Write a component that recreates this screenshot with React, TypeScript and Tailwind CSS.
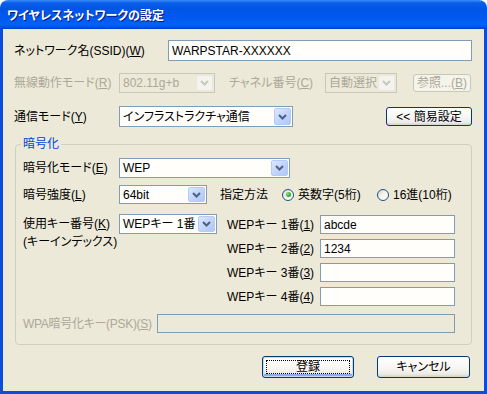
import React from "react";

const Chevron = ({ color }: { color: string }) => (
  <svg width="9" height="6" viewBox="0 0 9 6">
    <path d="M1 1l3.5 3.5L8 1" fill="none" stroke={color} strokeWidth="2" />
  </svg>
);

function Combo({ value, className, disabled }: { value: string; className: string; disabled?: boolean }) {
  return (
    <div
      className={`flex shrink-0 items-stretch border p-[1px] ${
        disabled ? "border-[#C9C7BA] bg-[#ECE9D8] text-[#ACA899]" : "border-[#7F9DB9] bg-[#FFFEFB] text-black"
      } ${className}`}
    >
      <span className="flex flex-1 items-center overflow-hidden whitespace-nowrap pl-[2px]">{value}</span>
      <span
        className={`flex w-[17px] items-center justify-center rounded-[2px] border ${
          disabled
            ? "border-[#EAE8DE] bg-[#F4F3EE]"
            : "border-[#B4CBF7] bg-[linear-gradient(135deg,#DDE8FE_0%,#C3D5FB_50%,#AFC6F5_100%)]"
        }`}
      >
        <Chevron color={disabled ? "#C9C7BA" : "#4D6185"} />
      </span>
    </div>
  );
}

function TextBox({ value, className, disabled }: { value?: string; className: string; disabled?: boolean }) {
  return (
    <input
      readOnly
      value={value ?? ""}
      className={`shrink-0 border border-[#7F9DB9] pl-[3px] outline-none ${
        disabled ? "bg-[#ECE9D8]" : "bg-[#FFFEFB]"
      } ${className}`}
    />
  );
}

function Radio({ checked }: { checked?: boolean }) {
  return (
    <span className="flex h-[12px] w-[12px] shrink-0 items-center justify-center rounded-full border border-[#1C5180] bg-[linear-gradient(135deg,#D6D3C6_0%,#F4F3EE_45%,#FFFFFF_100%)]">
      {checked && (
        <span className="h-[5px] w-[5px] rounded-full bg-[radial-gradient(circle_at_35%_35%,#8FE38F_0%,#31B131_55%,#1A8F1A_100%)]" />
      )}
    </span>
  );
}

const btn =
  "flex shrink-0 items-center justify-center rounded-[3px] border border-[#003C74] bg-[linear-gradient(180deg,#FFFFFF_0%,#F7F6F2_55%,#ECEBE6_85%,#D6D0C5_100%)] text-black";

export default function App() {
  return (
    <div className="flex h-[394px] w-[487px] flex-col bg-white font-['Liberation_Sans','Noto_Sans_CJK_JP',sans-serif] text-[12px] leading-[14px] [font-feature-settings:'palt']">
      {/* title bar */}
      <div className="flex h-[29px] shrink-0 items-center rounded-t-[8px] bg-[linear-gradient(180deg,#3C8CF7_0%,#0A5EEA_10%,#0055E5_30%,#0058EE_60%,#0062F7_85%,#0050DE_95%,#003AC6_100%)] pl-[7px]">
        <span className="font-['Noto_Sans_CJK_JP',sans-serif] text-[12px] font-bold text-white [text-shadow:1px_1px_0_#0A1883]">
          ワイヤレスネットワークの設定
        </span>
      </div>

      {/* client */}
      <div className="flex flex-1 flex-col border-x-[3px] border-b-[3px] border-[#0A4CDC] bg-[#ECE9D8]">
        {/* SSID */}
        <div className="mt-[11px] flex h-[21px] items-center">
          <span className="w-[165px] shrink-0 pl-[11px]">
            ネットワーク名(SSID)(<u>W</u>)
          </span>
          <TextBox value="WARPSTAR-XXXXXX" className="h-[21px] w-[304px]" />
        </div>

        {/* disabled row */}
        <div className="mt-[12px] flex h-[20px] items-center text-[#ACA899]">
          <span className="w-[116px] shrink-0 whitespace-nowrap pl-[11px]">
            無線動作モード(<u>R</u>)
          </span>
          <Combo value="802.11g+b" disabled className="h-[20px] w-[96px]" />
          <span className="ml-[14px] w-[96px] shrink-0">
            チャネル番号(<u>C</u>)
          </span>
          <Combo value="自動選択" disabled className="h-[20px] w-[72px]" />
          <span className="ml-[16px] flex h-[18px] w-[58px] shrink-0 items-center justify-center rounded-[3px] border border-[#C9C7BA] bg-[#F5F4EA]">
            参照...(<u>B</u>)
          </span>
        </div>

        {/* mode */}
        <div className="mt-[13px] flex h-[21px] items-center pr-[12px]">
          <span className="w-[116px] shrink-0 pl-[11px]">
            通信モード(<u>Y</u>)
          </span>
          <Combo value="インフラストラクチャ通信" className="h-[21px] w-[174px]" />
          <button className={`${btn} ml-auto h-[19px] w-[86px]`}>&lt;&lt; 簡易設定</button>
        </div>

        {/* encryption group */}
        <fieldset className="mx-[12px] mt-[10px] rounded-[4px] border border-[#D0D0BF] pb-[11px]">
          <legend className="ml-[5px] px-[2px] text-[#0046D5]">暗号化</legend>

          <div className="mt-[7px] flex h-[20px] items-center">
            <span className="w-[103px] shrink-0 pl-[7px]">
              暗号化モード(<u>E</u>)
            </span>
            <Combo value="WEP" className="h-[20px] w-[171px]" />
          </div>

          <div className="mt-[7px] flex h-[19px] items-center">
            <span className="w-[103px] shrink-0 pl-[7px]">
              暗号強度(<u>L</u>)
            </span>
            <Combo value="64bit" className="h-[19px] w-[88px]" />
            <span className="ml-[13px] w-[62px] shrink-0">指定方法</span>
            <span className="flex w-[95px] shrink-0 items-center gap-[4px]">
              <Radio checked />
              英数字(5桁)
            </span>
            <span className="flex items-center gap-[4px]">
              <Radio />
              16進(10桁)
            </span>
          </div>

          <div className="mt-[10px] flex">
            <div className="flex w-[201px] shrink-0 flex-col">
              <div className="flex h-[20px] items-center">
                <span className="w-[103px] shrink-0 pl-[7px]">
                  使用キー番号(<u>K</u>)
                </span>
                <Combo value="WEPキー 1番" className="h-[20px] w-[98px]" />
              </div>
              <span className="mt-[1px] pl-[7px]">(キーインデックス)</span>
            </div>
            <div className="ml-[10px] mt-[1px] flex flex-col gap-[5px]">
              {["1", "2", "3", "4"].map((n, i) => (
                <div key={n} className="flex h-[19px] items-center">
                  <span className="w-[93px] shrink-0">
                    WEPキー {n}番(<u>{n}</u>)
                  </span>
                  <TextBox value={i === 0 ? "abcde" : i === 1 ? "1234" : ""} className="h-[19px] w-[135px]" />
                </div>
              ))}
            </div>
          </div>

          <div className="mt-[8px] flex h-[19px] items-center">
            <span className="w-[141px] shrink-0 whitespace-nowrap pl-[7px] tracking-[-0.3px] text-[#ACA899]">
              WPA暗号化キー(PSK)(<u>S</u>)
            </span>
            <TextBox disabled className="h-[19px] w-[298px]" />
          </div>
        </fieldset>

        {/* buttons */}
        <div className="mt-[11px] flex justify-end gap-[23px] pr-[14px]">
          <button
            className={`${btn} h-[22px] w-[92px] p-[3px] shadow-[inset_0_0_0_1px_#C5DAF8,inset_0_-2px_0_1px_#8AAEE8]`}
          >
            <span className="flex h-full w-full items-center justify-center border border-dotted border-[#000]">
              登録
            </span>
          </button>
          <button className={`${btn} h-[22px] w-[93px]`}>キャンセル</button>
        </div>
      </div>
    </div>
  );
}
